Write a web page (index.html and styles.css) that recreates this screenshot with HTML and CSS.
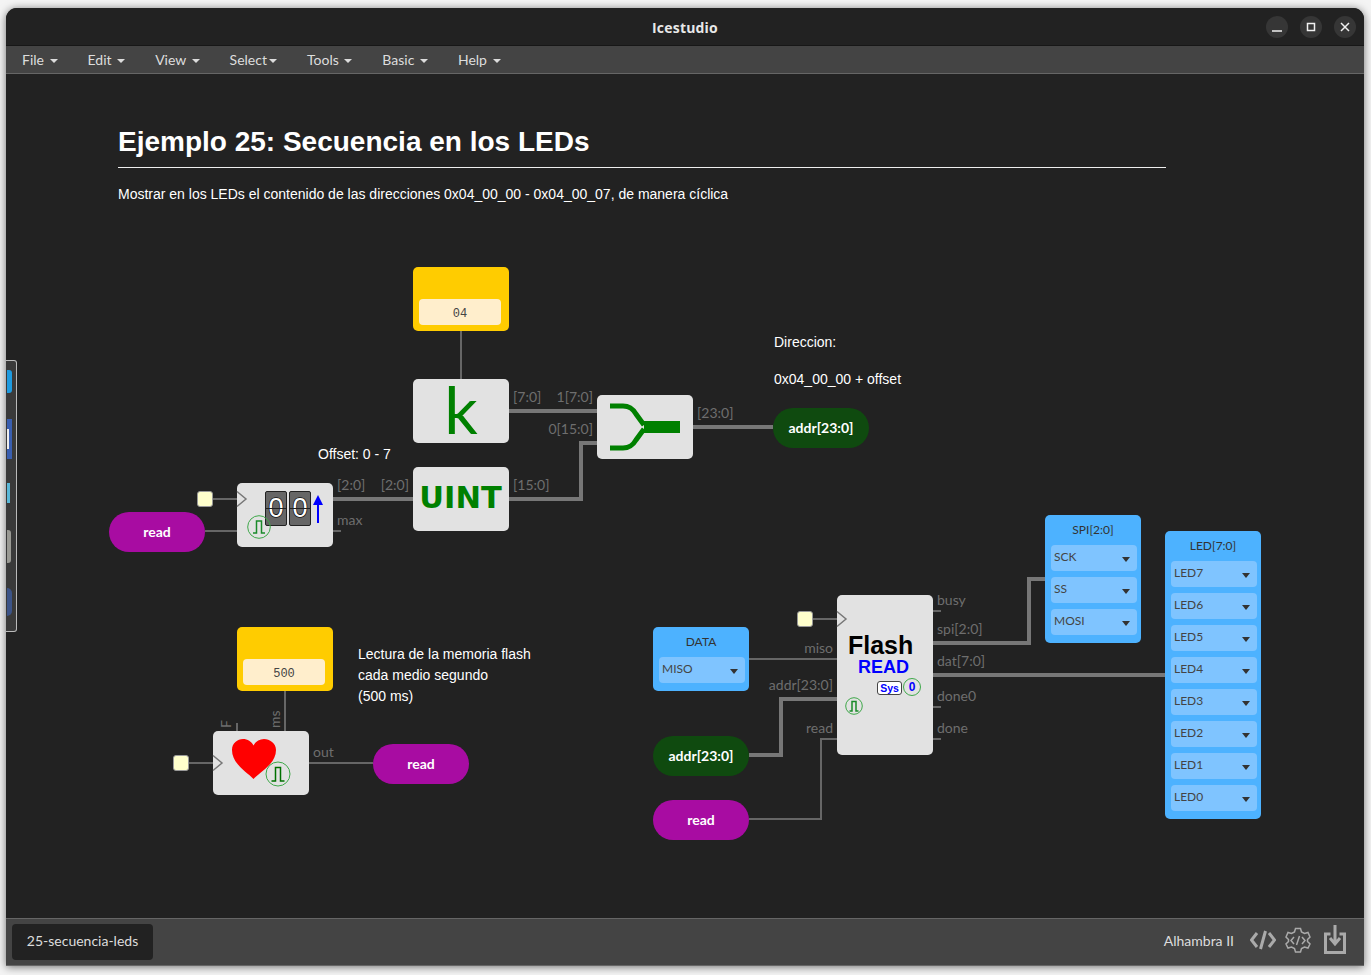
FILE: index.html
```html
<!DOCTYPE html>
<html lang="es">
<head>
<meta charset="utf-8">
<title>Icestudio</title>
<link rel="stylesheet" href="styles.css">
</head>
<body>
<div class="window">
  <header class="titlebar">
    <span class="app-title">Icestudio</span>
    <div class="win-buttons">
      <span class="win-btn"><svg width="12" height="12" viewBox="0 0 12 12"><path d="M1 10h10" class="win-ico"/></svg></span>
      <span class="win-btn"><svg width="12" height="12" viewBox="0 0 12 12"><rect x="2.500" y="2.500" width="7" height="7" class="win-ico"/></svg></span>
      <span class="win-btn"><svg width="12" height="12" viewBox="0 0 12 12"><path d="M2 2l8 8M10 2l-8 8" class="win-ico"/></svg></span>
    </div>
  </header>
  <nav class="menubar">
    <span class="menu-item">File <i class="caret"></i></span>
    <span class="menu-item">Edit <i class="caret"></i></span>
    <span class="menu-item">View <i class="caret"></i></span>
    <span class="menu-item">Select<i class="caret"></i></span>
    <span class="menu-item">Tools <i class="caret"></i></span>
    <span class="menu-item">Basic <i class="caret"></i></span>
    <span class="menu-item">Help <i class="caret"></i></span>
  </nav>

  <main class="canvas">
    <svg class="wires" width="1358" height="844" viewBox="6 74 1358 844">
      <g class="wire">
        <path d="M461 331V379"/>
        <path d="M213 499H237"/>
        <path d="M205 531H237"/>
        <path d="M333 531H341"/>
        <path d="M285 691V731"/>
        <path d="M237 723V731"/>
        <path d="M189 763H213"/>
        <path d="M309 763H373"/>
        <path d="M813 619H837"/>
        <path d="M749 659H837"/>
        <path d="M749 819H821V739H837"/>
        <path d="M933 611H941"/>
        <path d="M933 707H941"/>
        <path d="M933 739H941"/>
      </g>
      <g class="wire wire-bus">
        <path d="M509 411H597"/>
        <path d="M693 427H773"/>
        <path d="M333 499H413"/>
        <path d="M509 499H581V443H597"/>
        <path d="M749 755H781V699H837"/>
        <path d="M933 643H1029V579H1045"/>
        <path d="M933 675H1165"/>
      </g>
      <g class="port">
        <text x="513" y="402">[7:0]</text>
        <text x="593" y="402" class="end">1[7:0]</text>
        <text x="593" y="434" class="end">0[15:0]</text>
        <text x="697" y="418">[23:0]</text>
        <text x="337" y="490">[2:0]</text>
        <text x="409" y="490" class="end">[2:0]</text>
        <text x="513" y="490">[15:0]</text>
        <text x="337" y="525">max</text>
        <text x="313" y="757">out</text>
        <text x="231" y="728" transform="rotate(-90 231 728)">F</text>
        <text x="280" y="728" transform="rotate(-90 280 728)">ms</text>
        <text x="833" y="653" class="end">miso</text>
        <text x="833" y="690" class="end">addr[23:0]</text>
        <text x="833" y="733" class="end">read</text>
        <text x="937" y="605">busy</text>
        <text x="937" y="634">spi[2:0]</text>
        <text x="937" y="666">dat[7:0]</text>
        <text x="937" y="701">done0</text>
        <text x="937" y="733">done</text>
      </g>
    </svg>

    <section class="note note-main">
      <h1>Ejemplo 25: Secuencia en los LEDs</h1>
      <hr>
      <p>Mostrar en los LEDs el contenido de las direcciones 0x04_00_00 - 0x04_00_07, de manera cíclica</p>
    </section>
    <p class="note note-dir">Direccion:<br><br>0x04_00_00 + offset</p>
    <p class="note note-offset">Offset: 0 - 7</p>
    <p class="note note-read">Lectura de la memoria flash<br>cada medio segundo<br>(500 ms)</p>

    <div class="node const pos-c04"><span class="const-field">04</span></div>
    <div class="node const pos-c500"><span class="const-field">500</span></div>

    <div class="node block pos-k"><span class="k-glyph">k</span></div>
    <div class="node block pos-uint"><span class="uint-glyph">UINT</span></div>

    <div class="node block pos-join">
      <svg width="96" height="64" viewBox="0 0 96 64">
        <path class="join" d="M13 11H26C33 11 36 14 39 19L47 30"/>
        <path class="join" d="M13 53H26C33 53 36 50 39 45L47 34"/>
        <path class="join-out" d="M47 32H83"/>
      </svg>
    </div>

    <div class="node block pos-counter">
      <span class="digit digit-a">0</span>
      <span class="digit digit-b">0</span>
      <svg class="up-arrow" width="12" height="30" viewBox="0 0 12 30">
        <path d="M6 29V8" class="up-stem"/><path d="M1 11L6 1L11 11Z" class="up-head"/>
      </svg>
      <svg class="clk clk-counter" width="24" height="24" viewBox="0 0 24 24">
        <circle cx="12" cy="12" r="11.300"/><path d="M6 18H9.500V6H14.500V18H18"/>
      </svg>
    </div>

    <div class="node block pos-heart">
      <svg class="heart" width="46" height="42" viewBox="0 0 46 42">
        <path d="M22.500 41C16 34 1 26 1 12C1 5 6.500 1 12 1C16.500 1 20.500 3.500 22.500 7.500C24.500 3.500 28.500 1 33 1C38.500 1 45 5 45 12C45 26 29 34 22.500 41Z"/>
      </svg>
      <svg class="clk clk-heart" width="26" height="26" viewBox="0 0 26 26">
        <circle cx="13" cy="13" r="12"/><path d="M6.500 20H10.500V6.500H15.500V20H19.500"/>
      </svg>
    </div>

    <div class="node block pos-flash">
      <span class="flash-title">Flash</span>
      <span class="flash-sub">READ</span>
      <span class="sys-tag">Sys</span>
      <span class="sys-num">0</span>
      <svg class="clk clk-flash" width="18" height="18" viewBox="0 0 18 18">
        <circle cx="9" cy="9" r="8.300"/><path d="M4.500 14H7V4.500H11V14H13.500"/>
      </svg>
    </div>

    <svg class="clock-marks" width="1358" height="844" viewBox="6 74 1358 844">
      <path d="M237 491.500L246 499L237 506.500"/>
      <path d="M213 755.500L222 763L213 770.500"/>
      <path d="M837 611.500L846 619L837 626.500"/>
    </svg>

    <span class="clock-box pos-ck1"></span>
    <span class="clock-box pos-ck2"></span>
    <span class="clock-box pos-ck3"></span>

    <div class="node pill pill-read pos-read1">read</div>
    <div class="node pill pill-read pos-read2">read</div>
    <div class="node pill pill-read pos-read3">read</div>
    <div class="node pill pill-addr pos-addr1">addr[23:0]</div>
    <div class="node pill pill-addr pos-addr2">addr[23:0]</div>

    <div class="node pins pos-data">
      <div class="pins-title">DATA</div>
      <div class="pin-field">MISO<i class="pin-arrow"></i></div>
    </div>
    <div class="node pins pos-spi">
      <div class="pins-title">SPI[2:0]</div>
      <div class="pin-field">SCK<i class="pin-arrow"></i></div>
      <div class="pin-field">SS<i class="pin-arrow"></i></div>
      <div class="pin-field">MOSI<i class="pin-arrow"></i></div>
    </div>
    <div class="node pins pos-led">
      <div class="pins-title">LED[7:0]</div>
      <div class="pin-field">LED7<i class="pin-arrow"></i></div>
      <div class="pin-field">LED6<i class="pin-arrow"></i></div>
      <div class="pin-field">LED5<i class="pin-arrow"></i></div>
      <div class="pin-field">LED4<i class="pin-arrow"></i></div>
      <div class="pin-field">LED3<i class="pin-arrow"></i></div>
      <div class="pin-field">LED2<i class="pin-arrow"></i></div>
      <div class="pin-field">LED1<i class="pin-arrow"></i></div>
      <div class="pin-field">LED0<i class="pin-arrow"></i></div>
    </div>
  </main>

  <footer class="footer">
    <span class="tab">25-secuencia-leds</span>
    <div class="footer-right">
      <span class="board">Alhambra II</span>
      <svg class="foot-ico" width="26" height="20" viewBox="0 0 26 20">
        <path d="M7 3L1.500 10L7 17M19 3L24.500 10L19 17M15.500 1L10.500 19"/>
      </svg>
      <svg class="foot-ico foot-gear" width="26" height="26" viewBox="0 0 26 26">
        <path d="M10.500 1.500H15.500L16.500 5L19.500 6.500L23 5.500L25 10L22.500 12.500V14.500L25 17L23 21L19.500 20L16.500 21.500L15.500 25H10.500L9.500 21.500L6.500 20L3 21L1 17L3.500 14.500V12.500L1 10L3 5.500L6.500 6.500L9.500 5Z"/>
        <path d="M9 10L6 13.500L9 17M17 10L20 13.500L17 17M14.500 9L11.500 18"/>
      </svg>
      <svg class="foot-ico foot-save" width="22" height="29" viewBox="0 0 22 29">
        <path d="M6.500 9H1.500V27.500H20.500V9H15.500"/>
        <path d="M11 0V18M6 13L11 19L16 13"/>
      </svg>
    </div>
  </footer>

  <aside class="dock">
    <i class="dock-a"></i><i class="dock-b"></i><i class="dock-c"></i><i class="dock-d"></i><i class="dock-e"></i>
  </aside>
</div>
</body>
</html>
```

FILE: styles.css
```css
* { box-sizing: border-box; }
html, body { height: 100%; }
body {
  margin: 0;
  background: #f4f4f4;
  padding: 8px 7px 9px 6px;
  font-family: "Lato", sans-serif;
  overflow: hidden;
}
.window {
  position: relative;
  height: 958px;
  display: flex;
  flex-direction: column;
  background: #222;
  border-radius: 11px 11px 0 0;
  box-shadow: 0 1px 9px rgba(0, 0, 0, .55);
  overflow: hidden;
}
.titlebar {
  height: 38px;
  flex: none;
  position: relative;
  display: flex;
  align-items: center;
  justify-content: center;
  background: #222;
  border-bottom: 1px solid #171717;
}
.app-title { color: #e8e8e8; font: 700 14px "Open Sans", sans-serif; margin-top: 1px; letter-spacing: .2px; }
.win-buttons { position: absolute; right: 8px; top: 8px; display: flex; gap: 12px; }
.win-btn { width: 22px; height: 22px; border-radius: 50%; background: #363636; display: flex; align-items: center; justify-content: center; }
.win-ico { fill: none; stroke: #f0f0f0; stroke-width: 1.500; }

.menubar {
  height: 28px;
  flex: none;
  display: flex;
  align-items: center;
  padding-left: 1px;
  background: #444;
  border-bottom: 1px solid #666;
}
.menu-item { padding: 0 15px; color: #ddd; font-size: 14px; line-height: 27px; white-space: nowrap; }
.caret {
  display: inline-block;
  width: 0;
  height: 0;
  margin-left: 2px;
  vertical-align: middle;
  border-top: 4px solid #ddd;
  border-left: 4px solid transparent;
  border-right: 4px solid transparent;
}

.canvas { position: relative; flex: 1; background: #222; overflow: hidden; }
.wires, .clock-marks { position: absolute; left: 0; top: 0; }
.clock-marks path { fill: none; stroke: #777; stroke-width: 1.500; }
.wire path { fill: none; stroke: #666; stroke-width: 2; }
.wire-bus path { stroke: #777; stroke-width: 4; }
.port text { fill: #6e6e6e; font: 14px "Lato", sans-serif; }
.port .end { text-anchor: end; }

.note { position: absolute; margin: 0; color: #fff; font: 14px/21px "Liberation Sans", sans-serif; white-space: nowrap; }
.note-main { left: 112px; top: 51px; width: 1048px; }
.note-main h1 { margin: 0; font: 700 28px/34px "Liberation Sans", sans-serif; }
.note-main hr { margin: 8px 0 0; border: 0; border-top: 1px solid #eee; }
.note-main p { margin: 16px 0 0; }
.note-dir { left: 768px; top: 259px; line-height: 18.500px; }
.note-offset { left: 312px; top: 370px; }
.note-read { left: 352px; top: 570px; }

.node { position: absolute; width: 96px; }
.block { height: 64px; background: #e2e2e2; border-radius: 5px; }
.const { height: 64px; background: #fc0; border-radius: 5px; }
.const-field {
  position: absolute;
  left: 6px;
  right: 8px;
  top: 32px;
  height: 26px;
  background: #fec;
  border-radius: 4px;
  color: #444;
  font: 12px/31px "Liberation Mono", monospace;
  text-align: center;
}

.pos-c04 { left: 407px; top: 193px; }
.pos-c500 { left: 231px; top: 553px; }
.pos-k { left: 407px; top: 305px; }
.pos-uint { left: 407px; top: 393px; }
.pos-join { left: 591px; top: 321px; }
.pos-counter { left: 231px; top: 409px; }
.pos-heart { left: 207px; top: 657px; }
.pos-flash { left: 831px; top: 521px; height: 160px; }
.pos-read1 { left: 103px; top: 438px; }
.pos-read2 { left: 367px; top: 670px; }
.pos-read3 { left: 647px; top: 726px; }
.pos-addr1 { left: 767px; top: 334px; }
.pos-addr2 { left: 647px; top: 662px; }
.pos-data { left: 647px; top: 553px; height: 64px; }
.pos-spi { left: 1039px; top: 441px; height: 128px; }
.pos-led { left: 1159px; top: 457px; height: 288px; }
.pos-ck1 { left: 191px; top: 417px; }
.pos-ck2 { left: 167px; top: 681px; }
.pos-ck3 { left: 791px; top: 537px; }

.k-glyph {
  position: absolute;
  left: 0;
  right: 0;
  top: -8px;
  color: #008000;
  font: 400 66px/76px "Lato", sans-serif;
  text-align: center;
}
.uint-glyph {
  position: absolute;
  left: -1px;
  right: 0;
  top: 10px;
  color: #008000;
  font: 700 30.500px/42px "DejaVu Sans", sans-serif;
  text-align: center;
  white-space: nowrap;
}
.pos-join svg { display: block; }
.join { fill: none; stroke: #008000; stroke-width: 5; }
.join-out { fill: none; stroke: #008000; stroke-width: 12; }

.digit {
  position: absolute;
  top: 8px;
  width: 22px;
  height: 35px;
  background: #666;
  border: 1px solid #222;
  border-radius: 2px;
  color: #fff;
  font: 27px/33px "Liberation Sans", sans-serif;
  text-align: center;
  -webkit-text-stroke: 1.500px #111;
  paint-order: stroke fill;
}
.digit::after {
  content: "";
  position: absolute;
  left: 0;
  right: 0;
  top: 16px;
  height: 1px;
  background: #222;
}
.digit-a { left: 28px; }
.digit-b { left: 52px; }
.up-arrow { position: absolute; left: 75px; top: 11px; }
.up-stem { fill: none; stroke: #00f; stroke-width: 2; }
.up-head { fill: #00f; }

.clk { position: absolute; }
.clk circle { fill: none; stroke: #3fa84a; stroke-width: 1; }
.clk path { fill: none; stroke: #1a8a2a; stroke-width: 1.500; }
.clk-counter { left: 10px; top: 32px; }
.clk-heart { left: 52px; top: 30px; }
.clk-heart path { stroke: #007000; }
.clk-flash { left: 8px; top: 102px; }
.heart { position: absolute; left: 18px; top: 7px; }
.heart path { fill: #f00; }

.flash-title { position: absolute; left: 11px; top: 35px; color: #000; font: 700 25px/30px "Liberation Sans", sans-serif; }
.flash-sub { position: absolute; left: 21px; top: 62px; color: #00f; font: 700 18px/20px "Liberation Sans", sans-serif; }
.sys-tag {
  position: absolute;
  left: 40px;
  top: 86px;
  width: 25px;
  height: 14px;
  background: #fff;
  border: 1px solid #444;
  border-radius: 3px;
  color: #00f;
  font: 700 10.500px/12px "Liberation Sans", sans-serif;
  text-align: center;
}
.sys-num {
  position: absolute;
  left: 66px;
  top: 83px;
  width: 18px;
  height: 18px;
  border: 1px solid #3fa84a;
  border-radius: 50%;
  color: #00f;
  font: 700 12px/16px "Liberation Sans", sans-serif;
  text-align: center;
}

.clock-box {
  position: absolute;
  width: 16px;
  height: 16px;
  background: #ffc;
  border: 1px solid #999;
  border-radius: 3px;
}

.pill {
  height: 40px;
  border-radius: 20px;
  color: #fff;
  font: 700 14px/39px "Lato", sans-serif;
  text-align: center;
}
.pill-read { background: #a80ca2; }
.pill-addr { background: #0f4a0f; }

.pins {
  display: flex;
  flex-direction: column;
  gap: 6px;
  padding: 0 4px 0 6px;
  background: #4db2ff;
  border-radius: 5px;
}
.pins-title { height: 24px; color: #333; font-size: 12px; line-height: 30px; text-align: center; margin-left: -6px; margin-right: -4px; }
.pin-field {
  position: relative;
  height: 26px;
  flex: none;
  padding-left: 3px;
  background: #7fc4ff;
  border-radius: 4px;
  color: #444;
  font-size: 12px;
  line-height: 23px;
}
.pin-arrow {
  position: absolute;
  right: 7px;
  top: 12px;
  width: 0;
  height: 0;
  border-top: 5px solid #333;
  border-left: 4px solid transparent;
  border-right: 4px solid transparent;
}

.footer {
  height: 48px;
  flex: none;
  display: flex;
  align-items: center;
  justify-content: space-between;
  padding: 0 18px 0 6px;
  background: #444;
  border-top: 1px solid #666;
  border-bottom: 1px solid #666;
}
.tab { width: 141px; height: 36px; background: #222; border-radius: 4px; color: #ddd; font-size: 14px; line-height: 33px; text-align: center; }
.footer-right { display: flex; align-items: center; margin-bottom: 5px; }
.board { color: #ddd; font-size: 14px; margin: 1px 16px 0 0; }
.foot-ico { fill: none; stroke: #aaa; stroke-width: 3; }
.foot-gear { margin-left: 9px; stroke-width: 1.500; }
.foot-save { margin-left: 13px; }

.dock {
  position: absolute;
  left: 0;
  top: 352px;
  width: 11px;
  height: 272px;
  background: #3a3a3a;
  border: 1px solid #bbb;
  border-left: 0;
  border-radius: 0 3px 3px 0;
}
.dock i { position: absolute; left: 1px; display: block; }
.dock-a { top: 9px; width: 5px; height: 23px; background: #1e9be0; border-radius: 0 3px 3px 0; }
.dock-b { top: 58px; width: 5px; height: 40px; background: linear-gradient(90deg, #eee 0 2px, #3a5fb0 2px); background-size: 100% 20px; background-position: 0 10px; background-repeat: no-repeat; background-color: #3a5fb0; }
.dock-c { top: 122px; width: 3px; height: 20px; background: #5ab8d8; }
.dock-d { top: 169px; width: 4px; height: 33px; background: #9a9a94; border-radius: 0 3px 3px 0; }
.dock-e { top: 227px; width: 5px; height: 28px; background: #3c5488; border-radius: 0 14px 14px 0; }
```
